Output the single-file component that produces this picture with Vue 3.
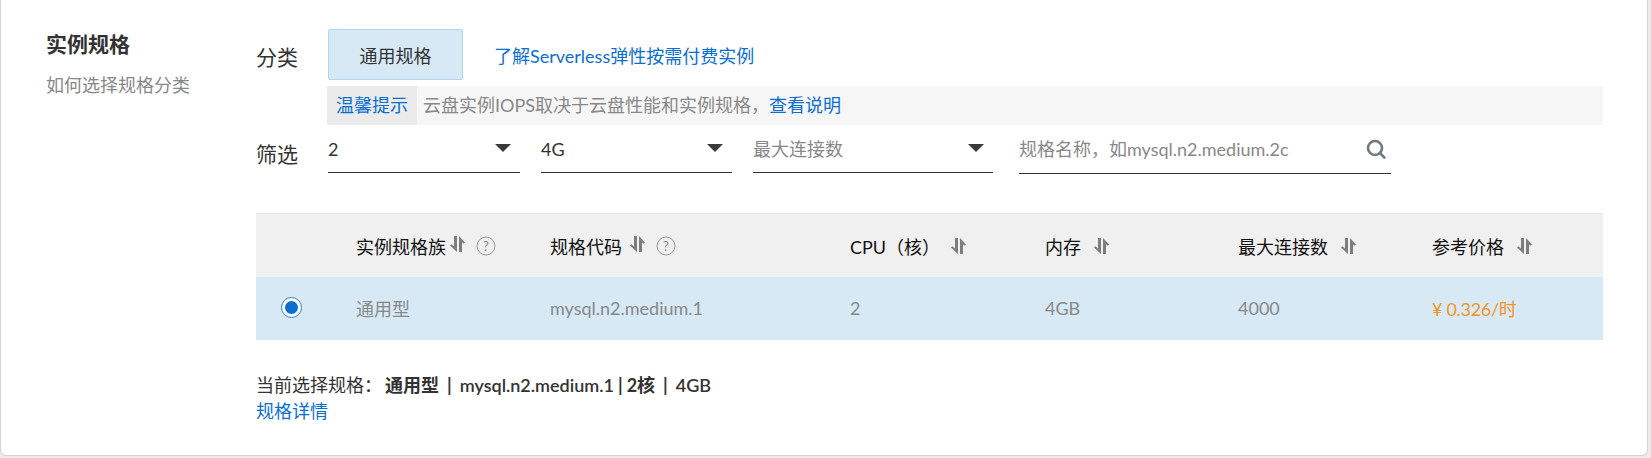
<script setup>
const selects = [
  { text: '2', cls: 's1' },
  { text: '4G', cls: 's2' },
  { text: '最大连接数', cls: 's3', ph: true }
]
const cols = [
  { t: '实例规格族', help: true, gap: 'near' },
  { t: '规格代码', help: true, gap: 'mid', raised: true },
  { t: 'CPU（核）', gap: 'cpu' },
  { t: '内存', gap: 'wide' },
  { t: '最大连接数', gap: 'wide' },
  { t: '参考价格', gap: 'wide' }
]
</script>

<template>
  <div class="card">
    <div class="side">
      <h3 class="title">实例规格</h3>
      <div class="sub">如何选择规格分类</div>
    </div>
    <div class="main">
      <div class="row-type">
        <span class="label">分类</span>
        <div class="type-wrap">
          <button class="type-btn">通用规格</button>
          <a class="link serverless">了解Serverless弹性按需付费实例</a>
        </div>
      </div>
      <div class="notice">
        <span class="tag">温馨提示</span>
        <span class="notice-text">云盘实例IOPS取决于云盘性能和实例规格，<a class="link">查看说明</a></span>
      </div>
      <div class="row-filter">
        <span class="label">筛选</span>
        <div v-for="s in selects" :key="s.text" class="select" :class="[s.cls, { ph: s.ph }]">
          <span>{{ s.text }}</span>
          <i class="caret"></i>
        </div>
        <div class="search">
          <span>规格名称，如mysql.n2.medium.2c</span>
          <svg width="20" height="20" viewBox="0 0 20 20" fill="none" stroke="#6f7a80" stroke-width="2.6">
            <circle cx="9" cy="9" r="7" />
            <path d="M14 14 L18.4 18.6" stroke-linecap="round" />
          </svg>
        </div>
      </div>
      <div class="table">
        <div class="thead">
          <div class="cell c0"></div>
          <div v-for="(c, i) in cols" :key="c.t" class="cell" :class="'c' + (i + 1)">
            <span>{{ c.t }}</span>
            <svg class="sort" :class="[c.gap, { raised: c.help }]" width="16" height="18" viewBox="0 0 16 18">
              <path d="M5 1H8V17L1 10.5L2.4 9.2L5 11.6Z" fill="#7d7d7d" />
              <path d="M10 1L16 7.6L14.6 8.8L13 7.2V17H10Z" fill="#7d7d7d" />
            </svg>
            <svg v-if="c.help" class="help" width="20" height="20" viewBox="0 0 20 20">
              <circle cx="10" cy="10" r="9" fill="none" stroke="#9a9a9a" />
              <text x="10" y="14.5" text-anchor="middle" class="help-q">?</text>
            </svg>
          </div>
        </div>
        <div class="tbody">
          <div class="cell c0"><span class="radio"><i></i></span></div>
          <div class="cell c1">通用型</div>
          <div class="cell c2">mysql.n2.medium.1</div>
          <div class="cell c3">2</div>
          <div class="cell c4">4GB</div>
          <div class="cell c5">4000</div>
          <div class="cell c6 price">¥ 0.326/时</div>
        </div>
      </div>
      <div class="current">
        <span>当前选择规格：</span>
        <b class="first">通用型</b>
        <b class="sep">|</b>
        <b class="med">mysql.n2.medium.1</b>
        <b class="sep tight">|</b>
        <b>2核</b>
        <b class="sep">|</b>
        <b class="med">4GB</b>
      </div>
      <a class="link detail">规格详情</a>
    </div>
  </div>
</template>

<style>
html, body { margin: 0; background: #ececec; }
</style>

<style scoped>
.card {
  box-sizing: border-box;
  width: 1648px;
  height: 456px;
  display: flex;
  background: #fff;
  border: 1px solid #d2d2d2;
  border-top: 0;
  border-radius: 0 0 6px 6px;
  font-family: Lato, "Noto Sans CJK SC", sans-serif;
  font-size: 18px;
  color: #333;
}
.side { width: 255px; padding: 29px 0 0 45px; box-sizing: border-box; }
.title { margin: 0; font-size: 21px; line-height: 30px; font-weight: 700; color: #333; }
.sub { margin-top: 13px; line-height: 26px; color: #888; }
.main { width: 1347px; }
.label { width: 72px; flex: none; font-size: 21px; line-height: 28px; color: #333; }
.row-type { display: flex; padding-top: 29px; }
.row-type .label { padding-top: 14px; }
.type-wrap { display: flex; align-items: center; }
.type-btn {
  box-sizing: border-box;
  width: 135px;
  height: 51px;
  background: #d7e9f5;
  border: 1px solid #b3d4ef;
  border-radius: 2px;
  font: inherit;
  color: #333;
  padding: 0;
}
.link { color: #0a6fd0; }
.serverless { margin-left: 31px; }
.notice {
  display: flex;
  height: 39px;
  margin: 6px 0 0 71px;
  background: #f6f6f6;
  line-height: 39px;
}
.tag { width: 90px; background: #ebebeb; color: #0a6fd0; text-align: center; flex: none; }
.notice-text { margin-left: 6px; color: #888; }
.row-filter { display: flex; margin-top: 10px; }
.row-filter .label { padding-top: 5px; }
.select {
  box-sizing: border-box;
  height: 38px;
  margin-right: 21px;
  border-bottom: 1px solid #333;
  display: flex;
  justify-content: space-between;
  line-height: 28px;
  color: #333;
}
.select.ph { color: #888; }
.s1 { width: 192px; }
.s2 { width: 191px; }
.s3 { width: 240px; margin-right: 26px; }
.caret {
  width: 0;
  height: 0;
  margin: 9px 9px 0 0;
  border-left: 8px solid transparent;
  border-right: 8px solid transparent;
  border-top: 8px solid #3a3a3a;
}
.search {
  box-sizing: border-box;
  width: 372px;
  height: 39px;
  border-bottom: 1px solid #333;
  display: flex;
  justify-content: space-between;
  line-height: 28px;
  color: #888;
}
.search svg { margin: 4px 5px 0 0; }
.table { margin-top: 39px; }
.row-filter { min-height: 39px; }
.thead, .tbody {
  display: grid;
  grid-template-columns: 100px 194px 300px 195px 193px 194px 1fr;
  align-items: center;
}
.thead { box-sizing: border-box; height: 64px; background: #f0f0f0; border-top: 1px solid #e8e8e8; color: #111; }
.tbody { height: 63px; padding-bottom: 2px; box-sizing: border-box; background: #d7e9f5; color: #888; }
.cell { display: flex; align-items: center; white-space: nowrap; }
.c0 { justify-content: center; margin-left: -30px; }
.thead .c0 { margin: 0; }
.sort { flex: none; }
.sort.near { margin-left: 3px; }
.sort.mid { margin-left: 7px; }
.sort.cpu { margin-left: 10px; }
.sort.wide { margin-left: 12px; }
.sort.raised { margin-top: -4px; }
.help { margin-left: 11px; flex: none; }
.help-q { font-size: 13px; fill: #8a8a8a; font-family: Lato, sans-serif; }
.radio {
  box-sizing: border-box;
  width: 21px;
  height: 21px;
  border-radius: 50%;
  border: 1px solid #2a80d4;
  background: #fff;
  display: flex;
  align-items: center;
  justify-content: center;
}
.radio i { width: 13px; height: 13px; border-radius: 50%; background: #0a6fd0; }
.price { color: #f7931e; letter-spacing: -0.3px; }
.current { display: flex; margin-top: 32px; line-height: 27px; color: #333; white-space: nowrap; }
.current b { font-weight: 700; }
.first { margin-left: 3px; }
.sep { margin: 0 8px; }
.sep.tight { margin: 0 4px; }
.current .med { font-weight: 600; }
.detail { display: block; line-height: 27px; margin-top: -1px; }
</style>
